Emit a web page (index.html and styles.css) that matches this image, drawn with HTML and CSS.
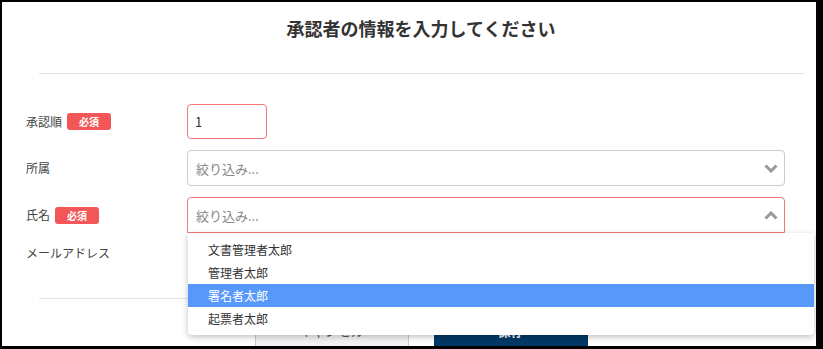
FILE: index.html
```html
<!DOCTYPE html>
<html lang="ja">
<head>
  <meta charset="UTF-8">
  <title>承認者の情報</title>
  <link rel="stylesheet" href="styles.css">
</head>
<body>
  <div class="modal">
    <h2 class="modal-title">承認者の情報を入力してください</h2>
    <hr class="divider">

    <div class="form">
      <div class="row">
        <label class="label">承認順 <span class="badge">必須</span></label>
        <div class="field">
          <input class="input input-small invalid" type="text" value="1">
        </div>
      </div>

      <div class="row">
        <label class="label">所属</label>
        <div class="field">
          <div class="select">
            <span class="placeholder">絞り込み...</span>
            <svg class="chevron" width="14" height="9" viewBox="0 0 14 9"><polyline points="1.5,1.5 7,7 12.5,1.5" /></svg>
          </div>
        </div>
      </div>

      <div class="row">
        <label class="label">氏名 <span class="badge">必須</span></label>
        <div class="field">
          <div class="select invalid open">
            <span class="placeholder">絞り込み...</span>
            <svg class="chevron" width="14" height="9" viewBox="0 0 14 9"><polyline points="1.5,7.5 7,2 12.5,7.5" /></svg>
            <ul class="menu">
              <li>文書管理者太郎</li>
              <li>管理者太郎</li>
              <li class="active">署名者太郎</li>
              <li>起票者太郎</li>
            </ul>
          </div>
        </div>
      </div>

      <div class="row row-text">
        <label class="label">メールアドレス</label>
        <div class="field"></div>
      </div>
    </div>

    <hr class="divider divider-bottom">

    <div class="footer">
      <button class="btn btn-cancel">キャンセル</button>
      <button class="btn btn-save">保存</button>
    </div>
  </div>
</body>
</html>
```

FILE: styles.css
```css
html, body {
  margin: 0;
  height: 349px;
}
body {
  background: #000;
  padding: 2px 7px 3px 2px;
  box-sizing: border-box;
  font-family: "Noto Sans CJK JP", "Noto Sans", sans-serif;
  color: #333;
  overflow: hidden;
}
.modal {
  background: #fff;
  height: 344px;
  overflow: hidden;
}
.modal-title {
  margin: 0;
  padding: 13px 0 0 24px;
  font-size: 18px;
  line-height: 26px;
  font-weight: bold;
  text-align: center;
  color: #333;
}
.divider {
  border: none;
  border-top: 1px solid #e3e3e3;
  margin: 32px 12px 0 37px;
}
.form {
  padding: 30px 31px 0 24px;
  display: flex;
  flex-direction: column;
  gap: 11px;
}
.row {
  display: grid;
  grid-template-columns: 161px 1fr;
  align-items: center;
}
.row-text {
  min-height: 18px;
}
.label {
  font-size: 12px;
  line-height: 18px;
  color: #444;
  display: flex;
  align-items: center;
  gap: 5px;
}
.badge {
  display: inline-block;
  background: #f35656;
  color: #fff;
  font-size: 10px;
  font-weight: bold;
  line-height: 17px;
  width: 44px;
  text-align: center;
  border-radius: 3px;
}
.input {
  box-sizing: border-box;
  height: 35px;
  border: 1px solid #ccc;
  border-radius: 4px;
  padding: 0 7px;
  font-family: inherit;
  font-size: 13px;
  color: #333;
  outline: none;
}
.input-small {
  width: 80px;
}
.invalid {
  border-color: #f07878 !important;
}
.select {
  position: relative;
  box-sizing: border-box;
  height: 36px;
  border: 1px solid #ccc;
  border-radius: 4px;
  display: flex;
  align-items: center;
  justify-content: space-between;
  padding: 0 6px 0 8px;
}
.placeholder {
  font-size: 13px;
  color: #888;
}
.chevron polyline {
  fill: none;
  stroke: #999;
  stroke-width: 3;
}
.select.open {
  border-bottom-left-radius: 0;
  border-bottom-right-radius: 0;
}
.menu {
  position: absolute;
  top: 35px;
  left: 0;
  right: -30px;
  margin: 0;
  padding: 5px 0;
  list-style: none;
  background: #fff;
  border-radius: 0 0 4px 4px;
  box-shadow: 0 2px 6px rgba(0, 0, 0, 0.25);
  z-index: 10;
}
.menu li {
  font-size: 12px;
  line-height: 23px;
  padding-left: 20px;
  color: #333;
}
.menu li.active {
  background: #5898fa;
  color: #fff;
}
.divider-bottom {
  margin-top: 36px;
}
.footer {
  display: flex;
  justify-content: center;
  gap: 25px;
  padding: 11px 0 0 24px;
}
.btn {
  width: 154px;
  height: 40px;
  border-radius: 4px;
  font-family: inherit;
  font-size: 13px;
}
.btn-cancel {
  background: linear-gradient(#fff, #f0f0f0);
  border: 1px solid #ccc;
  color: #555;
}
.btn-save {
  background: #003a66;
  border: 1px solid #003a66;
  color: #fff;
  font-weight: bold;
}
```
